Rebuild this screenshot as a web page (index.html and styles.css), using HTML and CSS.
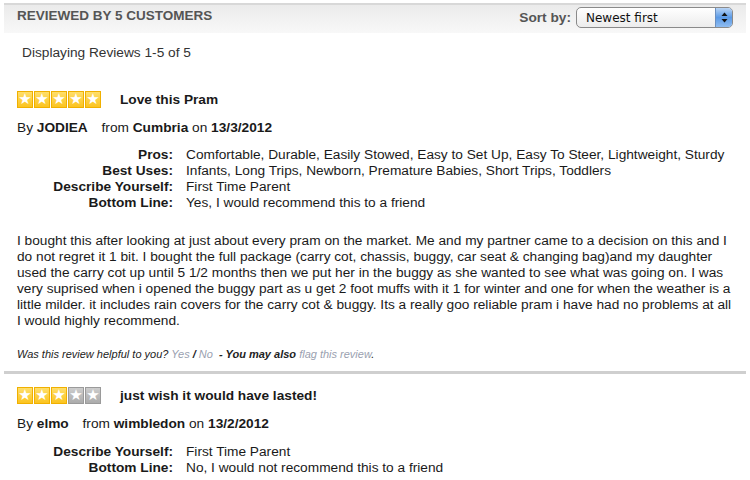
FILE: index.html
```html
<!DOCTYPE html>
<html lang="en">
<head>
    <meta charset="UTF-8">
    <title>Customer Reviews</title>
    <link rel="stylesheet" href="styles.css">
</head>
<body>
    <div class="reviews">
        <div class="reviews-head">
            <h2>Reviewed by 5 customers</h2>
            <div class="sort">
                <span class="sort-label">Sort by:</span>
                <div class="sort-select">
                    <span>Newest first</span>
                    <span class="sort-arrows">
                        <svg width="7" height="11" viewBox="0 0 7 11"><path d="M3.5 0.5 L6.5 4 L0.5 4 Z" fill="#111"/><path d="M0.5 7 L6.5 7 L3.5 10.5 Z" fill="#111"/></svg>
                    </span>
                </div>
            </div>
        </div>

        <p class="count">Displaying Reviews 1-5 of 5</p>

        <div class="review">
            <div class="review-title">
                <div class="stars">
                    <span class="star on">★</span><span class="star on">★</span><span class="star on">★</span><span class="star on">★</span><span class="star on">★</span>
                </div>
                <h3>Love this Pram</h3>
            </div>
            <div class="byline">By <b class="author">JODIEA</b> from <b>Cumbria</b> on <b>13/3/2012</b></div>
            <dl class="attrs">
                <dt>Pros:</dt><dd>Comfortable, Durable, Easily Stowed, Easy to Set Up, Easy To Steer, Lightweight, Sturdy</dd>
                <dt>Best Uses:</dt><dd>Infants, Long Trips, Newborn, Premature Babies, Short Trips, Toddlers</dd>
                <dt>Describe Yourself:</dt><dd>First Time Parent</dd>
                <dt>Bottom Line:</dt><dd>Yes, I would recommend this to a friend</dd>
            </dl>
            <p class="review-text">I bought this after looking at just about every pram on the market. Me and my partner came to a decision on this and I do not regret it 1 bit. I bought the full package (carry cot, chassis, buggy, car seat &amp; changing bag)and my daughter used the carry cot up until 5 1/2 months then we put her in the buggy as she wanted to see what was going on. I was very suprised when i opened the buggy part as u get 2 foot muffs with it 1 for winter and one for when the weather is a little milder. it includes rain covers for the carry cot &amp; buggy. Its a really goo reliable pram i have had no problems at all I would highly recommend.</p>
            <p class="helpful">Was this review helpful to you? <a href="#">Yes</a> <b>/</b> <a href="#">No</a> &nbsp;<b>- You may also</b> <a href="#">flag this review</a>.</p>
        </div>

        <div class="review">
            <div class="review-title">
                <div class="stars">
                    <span class="star on">★</span><span class="star on">★</span><span class="star on">★</span><span class="star">★</span><span class="star">★</span>
                </div>
                <h3>just wish it would have lasted!</h3>
            </div>
            <div class="byline">By <b class="author">elmo</b> from <b>wimbledon</b> on <b>13/2/2012</b></div>
            <dl class="attrs">
                <dt>Describe Yourself:</dt><dd>First Time Parent</dd>
                <dt>Bottom Line:</dt><dd>No, I would not recommend this to a friend</dd>
            </dl>
        </div>
    </div>
</body>
</html>
```

FILE: styles.css
```css
body {
    margin: 0;
    background: #fff;
    font-family: "Liberation Sans", Arial, sans-serif;
    font-size: 13.7px;
    color: #1a1a1a;
}
.reviews {
    padding: 3px 4px 0 4px;
}
.reviews-head {
    display: flex;
    justify-content: space-between;
    align-items: flex-start;
    height: 25px;
    border-top: 2px solid #d8d8d8;
    background: linear-gradient(to bottom, #ebebeb, #f8f8f8);
    padding: 3px 13px 0 13px;
}
.reviews-head h2 {
    margin: 0;
    font-size: 13.5px;
    line-height: 16px;
    text-transform: uppercase;
    color: #555;
}
.sort {
    display: flex;
    align-items: center;
    gap: 5px;
    margin-top: -1px;
}
.sort-label {
    font-weight: bold;
    color: #555;
}
.sort-select {
    display: flex;
    justify-content: space-between;
    align-items: center;
    width: 155px;
    height: 19px;
    border: 1px solid #8a8a8a;
    border-radius: 5px;
    background: linear-gradient(to bottom, #fff, #ececec);
    font-family: "DejaVu Sans", sans-serif;
    font-size: 12px;
    color: #111;
    overflow: hidden;
}
.sort-select span:first-child {
    padding-left: 9px;
}
.sort-arrows {
    display: flex;
    align-items: center;
    justify-content: center;
    width: 16px;
    height: 19px;
    border-left: 1px solid #6a8fc0;
    background: linear-gradient(to bottom, #b8d4f5, #5b9ae6 50%, #8fbcf0);
}
.count {
    margin: 12px 0 0 18px;
    line-height: 16px;
    color: #333;
}
.review {
    padding: 0 13px;
}
.review-title {
    display: flex;
    align-items: center;
    gap: 19px;
    margin-top: 30px;
}
.review + .review .review-title {
    margin-top: 13px;
}
.stars {
    display: flex;
    gap: 1px;
}
.star {
    width: 16px;
    height: 17px;
    line-height: 17px;
    text-align: center;
    font-size: 15px;
    color: #fff;
    background: linear-gradient(to bottom, #ffe070, #fbc21a);
    box-shadow: inset 0 0 0 1px #f0b000;
    font-family: "DejaVu Sans", sans-serif;
}
.star:not(.on) {
    background: linear-gradient(to bottom, #cfcfcf, #a9a9a9);
    box-shadow: inset 0 0 0 1px #9a9a9a;
}
.review-title h3 {
    margin: 0;
    font-size: 13.7px;
    line-height: 16px;
}
.byline {
    margin-top: 12px;
    line-height: 16px;
}
.author {
    margin-right: 10px;
}
.attrs {
    display: grid;
    grid-template-columns: 156px 1fr;
    column-gap: 13px;
    margin: 11px 0 0 0;
    line-height: 16px;
}
.review + .review .attrs {
    margin-top: 12px;
}
.attrs dt {
    text-align: right;
    font-weight: bold;
}
.attrs dd {
    margin: 0;
}
.review-text {
    margin: 22px 0 0 0;
    width: 721px;
    line-height: 16px;
}
.helpful {
    margin: 18px -13px 0 -13px;
    padding: 0 0 10px 13px;
    border-bottom: 3px solid #cfcfcf;
    font-size: 11px;
    font-style: italic;
    line-height: 14px;
    color: #222;
}
.helpful a {
    color: #9a9fb0;
    text-decoration: none;
}
```
